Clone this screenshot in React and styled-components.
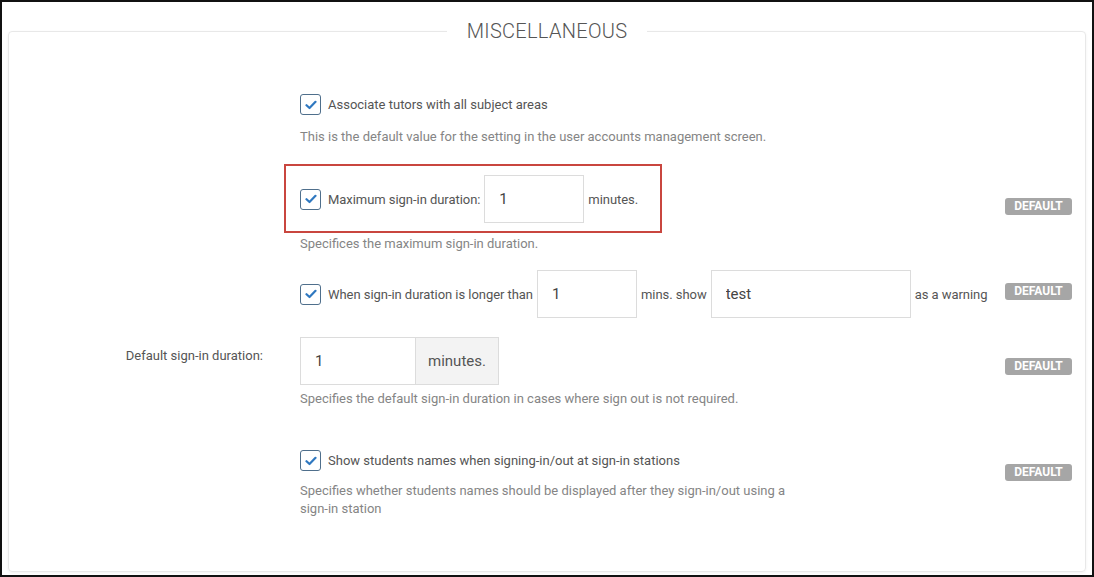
import React from 'react'
import styled, { createGlobalStyle } from 'styled-components'

const GlobalStyle = createGlobalStyle`
    html, body {
        margin: 0;
        padding: 0;
        background: #fff;
    }
    body {
        font-family: Roboto, "Liberation Sans", Arial, sans-serif;
    }
`
const Frame = styled.div`
    width: 1094px;
    height: 577px;
    box-sizing: border-box;
    border: 2px solid #111;
    padding: 17px 6px 3px 6px;
    display: flex;
    flex-direction: column;
    background: #fff;
`
const Card = styled.fieldset`
    flex: 1;
    margin: 0;
    min-width: 0;
    padding: 0;
    border: 1px solid #e8e8e8;
    border-radius: 4px;
    box-shadow: 0 1px 3px rgba(0, 0, 0, 0.06);
`
const Legend = styled.legend`
    margin: 0 auto;
    padding: 0 20px;
    font-size: 20px;
    line-height: 24px;
    font-weight: 300;
    letter-spacing: 0.3px;
    color: #555;
    background: #fff;
`
const Body = styled.div`
    padding: 51px 13px 0 0;
`
const Setting = styled.div`
    display: grid;
    grid-template-columns: 291px 1fr auto;
    margin-top: ${props => props.mt || 0}px;
`
const SideLabel = styled.div`
    padding-right: 37px;
    text-align: right;
    font-size: 13px;
    color: #555;
    line-height: 18px;
    padding-top: ${props => props.pt || 0}px;
`
const Content = styled.div`
    display: flex;
    flex-direction: column;
    align-items: flex-start;
`
const Line = styled.div`
    display: flex;
    align-items: center;
    gap: 4px;
    font-size: 13px;
    color: #555;
    letter-spacing: -0.05px;
`
const Highlight = styled.div`
    display: inline-flex;
    margin-left: -16px;
    padding: 9px 22px 8px 14px;
    border: 2px solid #c9463f;
`
const CheckLabel = styled.label`
    display: flex;
    align-items: center;
    gap: 7px;
    font-size: 13px;
    color: #555;
    line-height: 21px;
`
const Box = styled.span`
    width: 21px;
    height: 21px;
    box-sizing: border-box;
    border: 1px solid #4f6f8c;
    border-radius: 3px;
    background: #fff;
    display: flex;
    align-items: center;
    justify-content: center;
`
const TextInput = styled.input`
    width: ${props => props.w || 100}px;
    height: 48px;
    box-sizing: border-box;
    border: 1px solid #dcdcdc;
    border-radius: 0;
    padding: 0 0 0 14px;
    font-family: Roboto, "Liberation Sans", Arial, sans-serif;
    font-size: 15px;
    color: #444;
    background: #fff;
    outline: none;
`
const Group = styled.div`
    display: flex;
`
const Addon = styled.span`
    width: 83px;
    height: 48px;
    box-sizing: border-box;
    border: 1px solid #dcdcdc;
    border-left: none;
    background: #f3f3f3;
    display: flex;
    align-items: center;
    justify-content: center;
    font-size: 15px;
    color: #555;
`
const Help = styled.p`
    margin: ${props => props.mt || 0}px 0 0 0;
    max-width: ${props => props.max || 600}px;
    font-size: 13px;
    line-height: 18px;
    color: #858585;
`
const Badge = styled.span`
    align-self: start;
    margin-top: ${props => props.top || 0}px;
    width: 67px;
    height: 17px;
    box-sizing: border-box;
    border-radius: 3px;
    background: #a6a6a6;
    color: #fff;
    font-size: 12px;
    font-weight: 700;
    line-height: 17px;
    text-align: center;
    visibility: ${props => props.hidden ? 'hidden' : 'visible'};
`

const Check = ({ children }) => (
    <CheckLabel>
        <Box>
            <svg width="12" height="10" viewBox="0 0 12 10">
                <polyline points="1.5,5.2 4.5,8 10.5,1.8" fill="none" stroke="#2f78c0" strokeWidth="2.2" strokeLinecap="round" strokeLinejoin="round" />
            </svg>
        </Box>
        {children}
    </CheckLabel>
)

const App = () => {
    return (
        <>
            <GlobalStyle />
            <Frame>
                <Card>
                    <Legend>MISCELLANEOUS</Legend>
                    <Body>
                        <Setting>
                            <SideLabel />
                            <Content>
                                <Check>Associate tutors with all subject areas</Check>
                                <Help mt={13}>This is the default value for the setting in the user accounts management screen.</Help>
                            </Content>
                            <Badge hidden>DEFAULT</Badge>
                        </Setting>
                        <Setting mt={18}>
                            <SideLabel />
                            <Content>
                                <Highlight>
                                    <Line>
                                        <Check>Maximum sign-in duration:</Check>
                                        <TextInput defaultValue="1" />
                                        <span>minutes.</span>
                                    </Line>
                                </Highlight>
                                <Help mt={2}>Specifices the maximum sign-in duration.</Help>
                            </Content>
                            <Badge top={34}>DEFAULT</Badge>
                        </Setting>
                        <Setting mt={17}>
                            <SideLabel />
                            <Content>
                                <Line>
                                    <Check>When sign-in duration is longer than</Check>
                                    <TextInput defaultValue="1" />
                                    <span>mins. show</span>
                                    <TextInput w={200} defaultValue="test" />
                                    <span>as a warning</span>
                                </Line>
                            </Content>
                            <Badge top={13}>DEFAULT</Badge>
                        </Setting>
                        <Setting mt={19}>
                            <SideLabel pt={10}>Default sign-in duration:</SideLabel>
                            <Content>
                                <Group>
                                    <TextInput w={116} defaultValue="1" />
                                    <Addon>minutes.</Addon>
                                </Group>
                                <Help mt={5}>Specifies the default sign-in duration in cases where sign out is not required.</Help>
                            </Content>
                            <Badge top={21}>DEFAULT</Badge>
                        </Setting>
                        <Setting mt={42}>
                            <SideLabel />
                            <Content>
                                <Check>Show students names when signing-in/out at sign-in stations</Check>
                                <Help mt={11} max={500}>Specifies whether students names should be displayed after they sign-in/out using a sign-in station</Help>
                            </Content>
                            <Badge top={14}>DEFAULT</Badge>
                        </Setting>
                    </Body>
                </Card>
            </Frame>
        </>
    )
}

export default App
